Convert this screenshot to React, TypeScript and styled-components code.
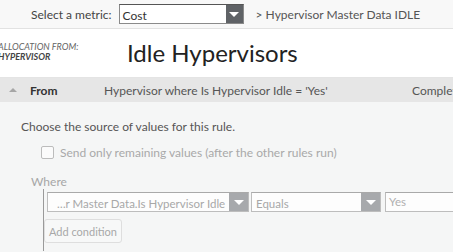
import styled, {createGlobalStyle} from "styled-components";

const GlobalStyle = createGlobalStyle`
  html, body {
    margin: 0;
    padding: 0;
    background: #f5f6f6;
    overflow: hidden;
  }
  body {
    font-family: "Segoe UI", Lato, "Open Sans", sans-serif;
    font-size: 12px;
    color: #333;
  }
`;

const Page = styled.div`
  width: 453px;
  height: 252px;
  display: flex;
  flex-direction: column;
  overflow: hidden;
`;

const TopBar = styled.div`
  height: 29px;
  box-sizing: border-box;
  border-bottom: 1px solid #e2e2e2;
  background: #f8f8f8;
  display: flex;
  align-items: center;
  padding-left: 31px;
  white-space: nowrap;
`;

const MetricLabel = styled.span`
  color: #444;
  margin-right: 7px;
`;

const Select = styled.div<{$width: number; $muted?: boolean}>`
  width: ${p => p.$width}px;
  height: 20px;
  box-sizing: border-box;
  border: 1px solid ${p => (p.$muted ? "#bdbdbd" : "#8a8a8a")};
  border-top-color: ${p => (p.$muted ? "#a9a9a9" : "#555")};
  background: ${p => (p.$muted ? "#fdfdfd" : "#fff")};
  display: flex;
  align-items: center;
  flex-shrink: 0;
`;

const SelectText = styled.span<{$muted?: boolean; $indent?: number}>`
  flex: 1;
  padding-left: ${p => p.$indent ?? 3}px;
  padding-top: 2px;
  color: ${p => (p.$muted ? "#a8a8a8" : "#333")};
  font-size: ${p => (p.$muted ? 11.5 : 12)}px;
  overflow: hidden;
  white-space: nowrap;
`;

const Arrow = styled.div<{$muted?: boolean}>`
  width: ${p => (p.$muted ? 19 : 17)}px;
  align-self: stretch;
  background: ${p => (p.$muted ? "#a7a9ac" : "#5f6266")};
  display: flex;
  align-items: center;
  justify-content: center;
  &::after {
    content: "";
    border-left: 5px solid transparent;
    border-right: 5px solid transparent;
    border-top: 5px solid #fff;
  }
`;

const Breadcrumb = styled.span`
  margin-left: 12px;
  color: #555;
`;

const Header = styled.div`
  height: 49px;
  box-sizing: border-box;
  background: #fff;
  border-bottom: 1px solid #e4e4e4;
  display: flex;
  align-items: center;
`;

const Source = styled.div`
  width: 129px;
  flex-shrink: 0;
  margin-left: -2px;
  margin-top: -3px;
  display: flex;
  flex-direction: column;
  font-style: italic;
  font-size: 9px;
  line-height: 10px;
`;

const SourceLabel = styled.span`
  color: #666;
`;

const SourceName = styled.span`
  color: #444;
  font-weight: 700;
`;

const Title = styled.h1`
  margin: 0;
  font-size: 24px;
  font-weight: 400;
  color: #222;
  margin-top: -1px;
`;

const SectionBar = styled.div`
  height: 24px;
  background: #e6e6e6;
  display: flex;
  align-items: center;
  white-space: nowrap;
`;

const Caret = styled.span`
  width: 0;
  height: 0;
  flex-shrink: 0;
  margin-left: 9px;
  border-left: 4px solid transparent;
  border-right: 4px solid transparent;
  border-bottom: 4px solid #a6a6a6;
`;

const SectionName = styled.span`
  margin-left: 13px;
  width: 74px;
  flex-shrink: 0;
  font-weight: 700;
  color: #333;
`;

const SectionSummary = styled.span`
  width: 308px;
  flex-shrink: 0;
  color: #555;
`;

const SectionStatus = styled.span`
  flex-shrink: 0;
  color: #555;
`;

const Body = styled.div`
  flex: 1;
  padding: 17px 0 0 21px;
  display: flex;
  flex-direction: column;
`;

const Hint = styled.div`
  color: #555;
`;

const CheckRow = styled.label`
  margin: 11px 0 0 20px;
  display: flex;
  align-items: center;
  gap: 6px;
  color: #a9a9a9;
  white-space: nowrap;
`;

const CheckBox = styled.span`
  width: 11px;
  height: 11px;
  border: 1px solid #bcbcbc;
  border-radius: 2px;
  background: #fbfbfb;
`;

const Where = styled.div`
  margin: 14px 0 0 10px;
  display: flex;
  flex-direction: column;
`;

const WhereLabel = styled.span`
  color: #a6a6a6;
`;

const Conditions = styled.div`
  margin-left: 12px;
  border-left: 1px solid #9a9a9a;
  padding: 3px 0 8px 3px;
  display: flex;
  flex-direction: column;
  gap: 7px;
`;

const ConditionRow = styled.div`
  display: flex;
  gap: 2px;
  white-space: nowrap;
`;

const TextInput = styled.div`
  width: 80px;
  height: 20px;
  margin-left: 2px;
  box-sizing: border-box;
  border: 1px solid #bdbdbd;
  border-top-color: #a9a9a9;
  background: #fdfdfd;
  color: #b0b0b0;
  font-size: 11.5px;
  padding: 2px 0 0 3px;
  flex-shrink: 0;
`;

const AddButton = styled.button`
  align-self: flex-start;
  margin-left: -3px;
  height: 24px;
  padding: 0 4px;
  border: 1px solid #dedede;
  border-radius: 3px;
  background: #f7f8f8;
  color: #a8a8a8;
  font-family: inherit;
  font-size: 11px;
`;

const App = () => (
  <Page>
    <GlobalStyle />
    <TopBar>
      <MetricLabel>Select a metric:</MetricLabel>
      <Select $width={125}>
        <SelectText>Cost</SelectText>
        <Arrow />
      </Select>
      <Breadcrumb>&gt; Hypervisor Master Data IDLE</Breadcrumb>
    </TopBar>
    <Header>
      <Source>
        <SourceLabel>ALLOCATION FROM:</SourceLabel>
        <SourceName>HYPERVISOR</SourceName>
      </Source>
      <Title>Idle Hypervisors</Title>
    </Header>
    <SectionBar>
      <Caret />
      <SectionName>From</SectionName>
      <SectionSummary>Hypervisor where Is Hypervisor Idle = 'Yes'</SectionSummary>
      <SectionStatus>Complete</SectionStatus>
    </SectionBar>
    <Body>
      <Hint>Choose the source of values for this rule.</Hint>
      <CheckRow>
        <CheckBox />
        Send only remaining values (after the other rules run)
      </CheckRow>
      <Where>
        <WhereLabel>Where</WhereLabel>
        <Conditions>
          <ConditionRow>
            <Select $width={202} $muted>
              <SelectText $muted $indent={9}>…r Master Data.Is Hypervisor Idle</SelectText>
              <Arrow $muted />
            </Select>
            <Select $width={130} $muted>
              <SelectText $muted $indent={4}>Equals</SelectText>
              <Arrow $muted />
            </Select>
            <TextInput>Yes</TextInput>
          </ConditionRow>
          <AddButton>Add condition</AddButton>
        </Conditions>
      </Where>
    </Body>
  </Page>
);

export default App;
